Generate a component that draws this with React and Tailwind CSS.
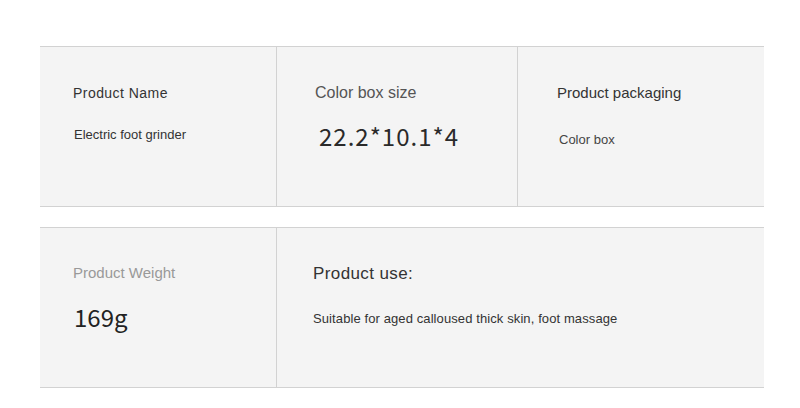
export default function App() {
  const sans = { fontFamily: '"Liberation Sans", Arial, sans-serif' };
  const cjk = { fontFamily: '"Noto Sans CJK SC", "Noto Sans", sans-serif' };
  return (
    <div className="w-[800px] h-[408px] bg-white pt-[46px]" style={sans}>
      <div className="ml-[40px] w-[724px] h-[161px] flex border-y border-[#d2d2d2] bg-[#f4f4f4]">
        <div className="w-[237px] border-r border-[#d2d2d2] pl-[33px] pt-[37px]">
          <div className="text-[14px] leading-[18px] tracking-[0.45px] text-[#333]">Product Name</div>
          <div className="mt-[25px] text-[13px] leading-[16px] text-[#333] pl-[1px]">Electric foot grinder</div>
        </div>
        <div className="w-[241px] border-r border-[#d2d2d2] pl-[38px] pt-[36px]">
          <div className="text-[16px] leading-[20px] text-[#555]">Color box size</div>
          <div className="mt-[18px] pl-[4px] text-[24px] leading-[30px] tracking-[1px] text-[#2a2a2a]" style={cjk}>22.2*10.1*4</div>
        </div>
        <div className="flex-1 pl-[39px] pt-[37px]">
          <div className="text-[15px] leading-[18px] text-[#333]">Product packaging</div>
          <div className="mt-[30px] pl-[2px] text-[13px] leading-[16px] text-[#444]">Color box</div>
        </div>
      </div>
      <div className="mt-[20px] ml-[40px] w-[724px] h-[161px] flex border-y border-[#d2d2d2] bg-[#f4f4f4]">
        <div className="w-[237px] border-r border-[#d2d2d2] pl-[33px] pt-[36px]">
          <div className="text-[15px] leading-[18px] text-[#999]">Product Weight</div>
          <div className="mt-[20px] pl-[1px] text-[24px] leading-[30px] text-[#222]" style={cjk}>169g</div>
        </div>
        <div className="flex-1 pl-[36px] pt-[36px]">
          <div className="text-[17px] leading-[20px] tracking-[0.4px] text-[#333]">Product use:</div>
          <div className="mt-[27px] text-[13px] leading-[16px] tracking-[0.1px] text-[#333]">Suitable for aged calloused thick skin, foot massage</div>
        </div>
      </div>
    </div>
  );
}
